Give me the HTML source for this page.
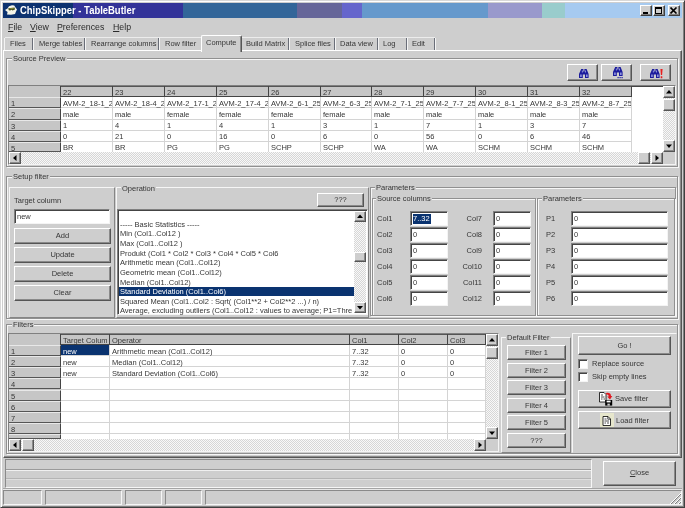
<!DOCTYPE html>
<html><head><meta charset="utf-8"><title>ChipSkipper - TableButler</title>
<style>
*{box-sizing:border-box;margin:0;padding:0}
html,body{width:685px;height:508px;overflow:hidden;background:#cecece}
body{position:relative;font-family:"Liberation Sans",sans-serif;font-size:7.5px;color:#363636;line-height:1}
#w{position:absolute;left:0;top:0;width:685px;height:508px;will-change:transform}
.a{position:absolute;white-space:nowrap}
.t{position:absolute;white-space:nowrap;line-height:10px;height:10px}
.btn{position:absolute;background:#cecece;border:1px solid;border-color:#fff #555 #555 #fff;box-shadow:inset -1px -1px 0 #8a8a8a;text-align:center;white-space:nowrap}
.sunk{position:absolute;background:#fff;border:1px solid;border-color:#808080 #f4f4f4 #f4f4f4 #808080;box-shadow:inset 1px 1px 0 #444}
.grp{position:absolute;border:1px solid #909090;box-shadow:1px 1px 0 #f6f6f6,inset 1px 1px 0 #f6f6f6}
.lbl{position:absolute;background:#cecece;white-space:nowrap;line-height:9px;height:9px;padding:0 1px}
.hl{position:absolute;height:1px}
.vl{position:absolute;width:1px}
.dither{position:absolute;background:#e6e6e6;background-image:repeating-conic-gradient(#f8f8f8 0 25%,#d6d6d6 0 50%);background-size:2px 2px}
.cell{position:absolute;white-space:nowrap;overflow:hidden;line-height:11px;height:11px}
u{text-decoration:underline}
</style></head>
<body>
<div id="w">
<div class="a" style="left:0px;top:0px;width:685px;height:508px;background:#cecece;border:1px solid;border-color:#d8d8d8 #404040 #404040 #d8d8d8;box-shadow:inset 1px 1px 0 #fff,inset -1px -1px 0 #808080"></div>
<div class="a" style="left:3px;top:3px;width:70px;height:15px;background:#0c3270"></div>
<div class="a" style="left:73px;top:3px;width:110px;height:15px;background:#333399"></div>
<div class="a" style="left:183px;top:3px;width:114px;height:15px;background:#336699"></div>
<div class="a" style="left:297px;top:3px;width:45px;height:15px;background:#666699"></div>
<div class="a" style="left:342px;top:3px;width:20px;height:15px;background:#6666cc"></div>
<div class="a" style="left:362px;top:3px;width:126px;height:15px;background:#6699cc"></div>
<div class="a" style="left:488px;top:3px;width:54px;height:15px;background:#9999cc"></div>
<div class="a" style="left:542px;top:3px;width:23px;height:15px;background:#99cccc"></div>
<div class="a" style="left:565px;top:3px;width:117px;height:15px;background:#a6caf0"></div>
<svg class="a" style="left:5px;top:5px" width="12" height="10" viewBox="0 0 12 10"><path d="M0 5 L2.5 3.5 L4 1.2 L7 0.2 L9.2 0.5 L10.5 2.5 L12 4.5 L11 6.5 L10 9 L6 9.8 L2 9.6 L2.6 7 Z" fill="#f6f6ea"/><path d="M3.2 3.2 L9.6 2.6 L10 4.6 L7.5 5.4 L6.5 4.8 L5.2 5.6 L3.8 5.2Z" fill="#4a5220"/><path d="M4.5 3.4 L8.5 3 L8.6 3.7 L4.6 4.1Z" fill="#98a040"/></svg>
<div class="t" style="left:20px;top:4px;color:#fff;font-weight:bold;font-size:10.5px;line-height:13px;height:13px;transform:scaleX(0.9);transform-origin:0 0">ChipSkipper - TableButler</div>
<div class="a" style="left:640px;top:5px;width:12px;height:11px;background:#cecece;border:1px solid;border-color:#fff #404040 #404040 #fff;box-shadow:inset -1px -1px 0 #808080"><div class="a" style="left:2px;top:6px;width:5px;height:2px;background:#000"></div></div>
<div class="a" style="left:653px;top:5px;width:12px;height:11px;background:#cecece;border:1px solid;border-color:#fff #404040 #404040 #fff;box-shadow:inset -1px -1px 0 #808080"><div class="a" style="left:1px;top:1px;width:7px;height:7px;border:1px solid #000;border-top-width:2px"></div></div>
<div class="a" style="left:668px;top:5px;width:12px;height:11px;background:#cecece;border:1px solid;border-color:#fff #404040 #404040 #fff;box-shadow:inset -1px -1px 0 #808080"><svg class="a" style="left:1px;top:1px" width="8" height="7" viewBox="0 0 8 7"><path d="M0.5 0.5 L6.5 6.5 M6.5 0.5 L0.5 6.5" stroke="#000" stroke-width="1.6"/></svg></div>
<div class="t" style="left:8px;top:21px;font-size:9.5px;line-height:12px;height:12px;color:#2a2a2a;transform:scaleX(0.925);transform-origin:0 0"><u>F</u>ile</div>
<div class="t" style="left:30px;top:21px;font-size:9.5px;line-height:12px;height:12px;color:#2a2a2a;transform:scaleX(0.925);transform-origin:0 0"><u>V</u>iew</div>
<div class="t" style="left:57px;top:21px;font-size:9.5px;line-height:12px;height:12px;color:#2a2a2a;transform:scaleX(0.925);transform-origin:0 0"><u>P</u>references</div>
<div class="t" style="left:113px;top:21px;font-size:9.5px;line-height:12px;height:12px;color:#2a2a2a;transform:scaleX(0.925);transform-origin:0 0"><u>H</u>elp</div>
<div class="a" style="left:3px;top:50px;width:679px;height:408px;border:1px solid;border-color:#fff #555 #555 #fff;box-shadow:inset -1px -1px 0 #8a8a8a"></div>
<div class="t" style="left:10px;top:39px;">Files</div>
<div class="a" style="left:32px;top:38px;width:1px;height:12px;background:#6a6e78"></div>
<div class="a" style="left:33px;top:38px;width:1px;height:12px;background:#f4f4f4"></div>
<div class="t" style="left:39px;top:39px;">Merge tables</div>
<div class="a" style="left:84px;top:38px;width:1px;height:12px;background:#6a6e78"></div>
<div class="a" style="left:85px;top:38px;width:1px;height:12px;background:#f4f4f4"></div>
<div class="t" style="left:91px;top:39px;">Rearrange columns</div>
<div class="a" style="left:158px;top:38px;width:1px;height:12px;background:#6a6e78"></div>
<div class="a" style="left:159px;top:38px;width:1px;height:12px;background:#f4f4f4"></div>
<div class="t" style="left:165px;top:39px;">Row filter</div>
<div class="a" style="left:201px;top:38px;width:1px;height:12px;background:#6a6e78"></div>
<div class="a" style="left:202px;top:38px;width:1px;height:12px;background:#f4f4f4"></div>
<div class="t" style="left:246px;top:39px;">Build Matrix</div>
<div class="a" style="left:288px;top:38px;width:1px;height:12px;background:#6a6e78"></div>
<div class="a" style="left:289px;top:38px;width:1px;height:12px;background:#f4f4f4"></div>
<div class="t" style="left:295px;top:39px;">Splice files</div>
<div class="a" style="left:334px;top:38px;width:1px;height:12px;background:#6a6e78"></div>
<div class="a" style="left:335px;top:38px;width:1px;height:12px;background:#f4f4f4"></div>
<div class="t" style="left:340px;top:39px;">Data view</div>
<div class="a" style="left:377px;top:38px;width:1px;height:12px;background:#6a6e78"></div>
<div class="a" style="left:378px;top:38px;width:1px;height:12px;background:#f4f4f4"></div>
<div class="t" style="left:383px;top:39px;">Log</div>
<div class="a" style="left:406px;top:38px;width:1px;height:12px;background:#6a6e78"></div>
<div class="a" style="left:407px;top:38px;width:1px;height:12px;background:#f4f4f4"></div>
<div class="t" style="left:412px;top:39px;">Edit</div>
<div class="a" style="left:434px;top:38px;width:1px;height:12px;background:#6a6e78"></div>
<div class="a" style="left:435px;top:38px;width:1px;height:12px;background:#f4f4f4"></div>
<div class="a" style="left:4px;top:38px;width:1px;height:12px;background:#f4f4f4"></div>
<div class="a" style="left:5px;top:37px;width:430px;height:1px;background:#ececec"></div>
<div class="a" style="left:201px;top:35px;width:41px;height:17px;background:#cecece;border:1px solid;border-color:#fff #555 #cecece #fff;border-bottom:none;box-shadow:inset -1px 0 0 #8a8a8a;border-radius:2px 2px 0 0"></div>
<div class="t" style="left:206px;top:38px;">Compute</div>
<div class="grp" style="left:6px;top:58px;width:672px;height:109px;"></div>
<div class="lbl" style="left:12px;top:54px">Source Preview</div>
<div class="btn" style="left:567px;top:64px;width:31px;height:17px;line-height:15px;"><svg class="a" style="left:10.5px;top:4px" width="14" height="12" viewBox="0 0 14 12"><path d="M2.2 0H4.4V2.6H5.4V0H7.6L9.6 5V9H6V5.6H3.8V9H0V5Z" fill="#1c1c9c"/><path d="M1.3 5.6h1.3v2.3h-1.3zM7.2 5.6h1.3v2.3h-1.3zM2.9 1.4h.8v2.2h-.8zM6.1 1.4h.8v2.2h-.8z" fill="#a8b0f0"/></svg></div>
<div class="btn" style="left:601px;top:64px;width:31px;height:17px;line-height:15px;"><svg class="a" style="left:10.5px;top:2px" width="14" height="12" viewBox="0 0 14 12"><path d="M2.2 0H4.4V2.6H5.4V0H7.6L9.6 5V9H6V5.6H3.8V9H0V5Z" fill="#1c1c9c"/><path d="M1.3 5.6h1.3v2.3h-1.3zM7.2 5.6h1.3v2.3h-1.3zM2.9 1.4h.8v2.2h-.8zM6.1 1.4h.8v2.2h-.8z" fill="#a8b0f0"/><path d="M4.5 10h1.2v1.3h-1.2zM6.5 10h1.2v1.3h-1.2zM8.5 10h1.2v1.3h-1.2z" fill="#1c1c9c"/></svg></div>
<div class="btn" style="left:640px;top:64px;width:31px;height:17px;line-height:15px;"><svg class="a" style="left:8.7px;top:3.5px" width="14" height="12" viewBox="0 0 14 12"><path d="M2.2 0H4.4V2.6H5.4V0H7.6L9.6 5V9H6V5.6H3.8V9H0V5Z" fill="#1c1c9c"/><path d="M1.3 5.6h1.3v2.3h-1.3zM7.2 5.6h1.3v2.3h-1.3zM2.9 1.4h.8v2.2h-.8zM6.1 1.4h.8v2.2h-.8z" fill="#a8b0f0"/><path d="M10.4 0h2.2l-.5 6h-1.2zM10.7 7.2h1.6v2h-1.6z" fill="#e82020"/></svg></div>
<div class="sunk" style="left:8px;top:85px;width:668px;height:80px;"></div>
<div class="a" style="left:9px;top:86px;width:623px;height:11.2px;background:#c6c6c6;border-bottom:1px solid #444;border-top:1px solid #555"></div>
<div class="a" style="left:9px;top:86px;width:52px;height:66px;background:#c6c6c6"></div>
<div class="a" style="left:60px;top:86px;width:1px;height:11.2px;background:#444"></div>
<div class="a" style="left:112px;top:86px;width:1px;height:11.2px;background:#444"></div>
<div class="a" style="left:164px;top:86px;width:1px;height:11.2px;background:#444"></div>
<div class="a" style="left:216px;top:86px;width:1px;height:11.2px;background:#444"></div>
<div class="a" style="left:268px;top:86px;width:1px;height:11.2px;background:#444"></div>
<div class="a" style="left:320px;top:86px;width:1px;height:11.2px;background:#444"></div>
<div class="a" style="left:371px;top:86px;width:1px;height:11.2px;background:#444"></div>
<div class="a" style="left:423px;top:86px;width:1px;height:11.2px;background:#444"></div>
<div class="a" style="left:475px;top:86px;width:1px;height:11.2px;background:#444"></div>
<div class="a" style="left:527px;top:86px;width:1px;height:11.2px;background:#444"></div>
<div class="a" style="left:579px;top:86px;width:1px;height:11.2px;background:#444"></div>
<div class="a" style="left:631px;top:86px;width:1px;height:11.2px;background:#444"></div>
<div class="cell" style="left:11px;top:87px;width:49px"></div>
<div class="cell" style="left:63px;top:87px;width:49px">22</div>
<div class="cell" style="left:115px;top:87px;width:49px">23</div>
<div class="cell" style="left:167px;top:87px;width:49px">24</div>
<div class="cell" style="left:219px;top:87px;width:49px">25</div>
<div class="cell" style="left:271px;top:87px;width:49px">26</div>
<div class="cell" style="left:323px;top:87px;width:48px">27</div>
<div class="cell" style="left:374px;top:87px;width:49px">28</div>
<div class="cell" style="left:426px;top:87px;width:49px">29</div>
<div class="cell" style="left:478px;top:87px;width:49px">30</div>
<div class="cell" style="left:530px;top:87px;width:49px">31</div>
<div class="cell" style="left:582px;top:87px;width:49px">32</div>
<div class="a" style="left:9px;top:97.2px;width:52px;height:11.2px;background:#c6c6c6;border-bottom:1px solid #555;border-right:1px solid #444;border-top:1px solid #e8e8e8"></div>
<div class="cell" style="left:11px;top:98.2px;height:10.2px">1</div>
<div class="a" style="left:61px;top:107.4px;width:571px;height:1px;background:#d4d4d4"></div>
<div class="cell" style="left:63px;top:97.80px;width:50px;">AVM-2_18-1_25</div>
<div class="cell" style="left:115px;top:97.80px;width:50px;">AVM-2_18-4_25</div>
<div class="cell" style="left:167px;top:97.80px;width:50px;">AVM-2_17-1_25</div>
<div class="cell" style="left:219px;top:97.80px;width:50px;">AVM-2_17-4_25</div>
<div class="cell" style="left:271px;top:97.80px;width:50px;">AVM-2_6-1_251</div>
<div class="cell" style="left:323px;top:97.80px;width:49px;">AVM-2_6-3_251</div>
<div class="cell" style="left:374px;top:97.80px;width:50px;">AVM-2_7-1_251</div>
<div class="cell" style="left:426px;top:97.80px;width:50px;">AVM-2_7-7_251</div>
<div class="cell" style="left:478px;top:97.80px;width:50px;">AVM-2_8-1_251</div>
<div class="cell" style="left:530px;top:97.80px;width:50px;">AVM-2_8-3_251</div>
<div class="cell" style="left:582px;top:97.80px;width:50px;">AVM-2_8-7_251</div>
<div class="a" style="left:9px;top:108.4px;width:52px;height:11.2px;background:#c6c6c6;border-bottom:1px solid #555;border-right:1px solid #444;border-top:1px solid #e8e8e8"></div>
<div class="cell" style="left:11px;top:109.4px;height:10.2px">2</div>
<div class="a" style="left:61px;top:118.60000000000001px;width:571px;height:1px;background:#d4d4d4"></div>
<div class="cell" style="left:63px;top:108.88px;width:50px;">male</div>
<div class="cell" style="left:115px;top:108.88px;width:50px;">male</div>
<div class="cell" style="left:167px;top:108.88px;width:50px;">female</div>
<div class="cell" style="left:219px;top:108.88px;width:50px;">female</div>
<div class="cell" style="left:271px;top:108.88px;width:50px;">female</div>
<div class="cell" style="left:323px;top:108.88px;width:49px;">female</div>
<div class="cell" style="left:374px;top:108.88px;width:50px;">male</div>
<div class="cell" style="left:426px;top:108.88px;width:50px;">male</div>
<div class="cell" style="left:478px;top:108.88px;width:50px;">male</div>
<div class="cell" style="left:530px;top:108.88px;width:50px;">male</div>
<div class="cell" style="left:582px;top:108.88px;width:50px;">male</div>
<div class="a" style="left:9px;top:119.6px;width:52px;height:11.2px;background:#c6c6c6;border-bottom:1px solid #555;border-right:1px solid #444;border-top:1px solid #e8e8e8"></div>
<div class="cell" style="left:11px;top:120.6px;height:10.2px">3</div>
<div class="a" style="left:61px;top:129.79999999999998px;width:571px;height:1px;background:#d4d4d4"></div>
<div class="cell" style="left:63px;top:119.96px;width:50px;">1</div>
<div class="cell" style="left:115px;top:119.96px;width:50px;">4</div>
<div class="cell" style="left:167px;top:119.96px;width:50px;">1</div>
<div class="cell" style="left:219px;top:119.96px;width:50px;">4</div>
<div class="cell" style="left:271px;top:119.96px;width:50px;">1</div>
<div class="cell" style="left:323px;top:119.96px;width:49px;">3</div>
<div class="cell" style="left:374px;top:119.96px;width:50px;">1</div>
<div class="cell" style="left:426px;top:119.96px;width:50px;">7</div>
<div class="cell" style="left:478px;top:119.96px;width:50px;">1</div>
<div class="cell" style="left:530px;top:119.96px;width:50px;">3</div>
<div class="cell" style="left:582px;top:119.96px;width:50px;">7</div>
<div class="a" style="left:9px;top:130.8px;width:52px;height:11.2px;background:#c6c6c6;border-bottom:1px solid #555;border-right:1px solid #444;border-top:1px solid #e8e8e8"></div>
<div class="cell" style="left:11px;top:131.8px;height:10.2px">4</div>
<div class="a" style="left:61px;top:141.0px;width:571px;height:1px;background:#d4d4d4"></div>
<div class="cell" style="left:63px;top:131.04px;width:50px;">0</div>
<div class="cell" style="left:115px;top:131.04px;width:50px;">21</div>
<div class="cell" style="left:167px;top:131.04px;width:50px;">0</div>
<div class="cell" style="left:219px;top:131.04px;width:50px;">16</div>
<div class="cell" style="left:271px;top:131.04px;width:50px;">0</div>
<div class="cell" style="left:323px;top:131.04px;width:49px;">6</div>
<div class="cell" style="left:374px;top:131.04px;width:50px;">0</div>
<div class="cell" style="left:426px;top:131.04px;width:50px;">56</div>
<div class="cell" style="left:478px;top:131.04px;width:50px;">0</div>
<div class="cell" style="left:530px;top:131.04px;width:50px;">6</div>
<div class="cell" style="left:582px;top:131.04px;width:50px;">46</div>
<div class="a" style="left:9px;top:142.0px;width:52px;height:10.0px;background:#c6c6c6;border-bottom:1px solid #555;border-right:1px solid #444;border-top:1px solid #e8e8e8"></div>
<div class="cell" style="left:11px;top:143.0px;height:9.0px">5</div>
<div class="cell" style="left:63px;top:142.12px;width:50px;">BR</div>
<div class="cell" style="left:115px;top:142.12px;width:50px;">BR</div>
<div class="cell" style="left:167px;top:142.12px;width:50px;">PG</div>
<div class="cell" style="left:219px;top:142.12px;width:50px;">PG</div>
<div class="cell" style="left:271px;top:142.12px;width:50px;">SCHP</div>
<div class="cell" style="left:323px;top:142.12px;width:49px;">SCHP</div>
<div class="cell" style="left:374px;top:142.12px;width:50px;">WA</div>
<div class="cell" style="left:426px;top:142.12px;width:50px;">WA</div>
<div class="cell" style="left:478px;top:142.12px;width:50px;">SCHM</div>
<div class="cell" style="left:530px;top:142.12px;width:50px;">SCHM</div>
<div class="cell" style="left:582px;top:142.12px;width:50px;">SCHM</div>
<div class="a" style="left:112px;top:97.2px;width:1px;height:54.8px;background:#d4d4d4"></div>
<div class="a" style="left:164px;top:97.2px;width:1px;height:54.8px;background:#d4d4d4"></div>
<div class="a" style="left:216px;top:97.2px;width:1px;height:54.8px;background:#d4d4d4"></div>
<div class="a" style="left:268px;top:97.2px;width:1px;height:54.8px;background:#d4d4d4"></div>
<div class="a" style="left:320px;top:97.2px;width:1px;height:54.8px;background:#d4d4d4"></div>
<div class="a" style="left:371px;top:97.2px;width:1px;height:54.8px;background:#d4d4d4"></div>
<div class="a" style="left:423px;top:97.2px;width:1px;height:54.8px;background:#d4d4d4"></div>
<div class="a" style="left:475px;top:97.2px;width:1px;height:54.8px;background:#d4d4d4"></div>
<div class="a" style="left:527px;top:97.2px;width:1px;height:54.8px;background:#d4d4d4"></div>
<div class="a" style="left:579px;top:97.2px;width:1px;height:54.8px;background:#d4d4d4"></div>
<div class="a" style="left:631px;top:97.2px;width:1px;height:54.8px;background:#d4d4d4"></div>
<div class="dither" style="left:663px;top:86px;width:12px;height:66px;"></div>
<div class="btn" style="left:663px;top:86px;width:12px;height:12px"><svg class="a" style="left:-1px;top:-1px" width="12" height="12"><polygon points="3.0,7.5 9.0,7.5 6.0,4.0" fill="#000"/></svg></div>
<div class="btn" style="left:663px;top:140px;width:12px;height:12px"><svg class="a" style="left:-1px;top:-1px" width="12" height="12"><polygon points="3.0,4.5 9.0,4.5 6.0,8.0" fill="#000"/></svg></div>
<div class="btn" style="left:663px;top:99px;width:12px;height:12px"></div>
<div class="dither" style="left:9px;top:152px;width:654px;height:12px;"></div>
<div class="a" style="left:663px;top:152px;width:12px;height:12px;background:#cecece"></div>
<div class="btn" style="left:9px;top:152px;width:12px;height:12px"><svg class="a" style="left:-1px;top:-1px" width="12" height="12"><polygon points="7.5,3.0 7.5,9.0 4.0,6.0" fill="#000"/></svg></div>
<div class="btn" style="left:651px;top:152px;width:12px;height:12px"><svg class="a" style="left:-1px;top:-1px" width="12" height="12"><polygon points="4.5,3.0 4.5,9.0 8.0,6.0" fill="#000"/></svg></div>
<div class="btn" style="left:638px;top:152px;width:12px;height:12px"></div>
<div class="grp" style="left:6px;top:176px;width:672px;height:143px;"></div>
<div class="lbl" style="left:12px;top:172px">Setup filter</div>
<div class="a" style="left:9px;top:187px;width:106px;height:131px;border:1px solid;border-color:#f6f6f6 #858585 #858585 #f6f6f6"></div>
<div class="t" style="left:14px;top:196px;">Target column</div>
<div class="sunk" style="left:14px;top:209px;width:96px;height:15px;"><div class="t" style="left:2px;top:2px">new</div></div>
<div class="btn" style="left:14px;top:228px;width:97px;height:16px;line-height:14px;line-height:13px">Add</div>
<div class="btn" style="left:14px;top:247px;width:97px;height:16px;line-height:14px;line-height:13px">Update</div>
<div class="btn" style="left:14px;top:266px;width:97px;height:16px;line-height:14px;line-height:13px">Delete</div>
<div class="btn" style="left:14px;top:285px;width:97px;height:16px;line-height:14px;line-height:13px">Clear</div>
<div class="a" style="left:116px;top:187px;width:253px;height:131px;border:1px solid;border-color:#f6f6f6 #858585 #858585 #f6f6f6"></div>
<div class="lbl" style="left:121px;top:184px">Operation</div>
<div class="btn" style="left:317px;top:193px;width:47px;height:14px;line-height:12px;">???</div>
<div class="sunk" style="left:117px;top:209px;width:251px;height:106px;"></div>
<div class="cell" style="left:120px;top:210.0px;width:233px;line-height:10px;height:10px;"></div>
<div class="cell" style="left:120px;top:220.0px;width:233px;line-height:10px;height:10px;">----- Basic Statistics -----</div>
<div class="cell" style="left:120px;top:229.0px;width:233px;line-height:10px;height:10px;">Min (Col1..Col12 )</div>
<div class="cell" style="left:120px;top:239.0px;width:233px;line-height:10px;height:10px;">Max (Col1..Col12 )</div>
<div class="cell" style="left:120px;top:249.0px;width:233px;line-height:10px;height:10px;">Produkt (Col1 * Col2 * Col3 * Col4 * Col5 * Col6</div>
<div class="cell" style="left:120px;top:258.0px;width:233px;line-height:10px;height:10px;">Arithmetic mean (Col1..Col12)</div>
<div class="cell" style="left:120px;top:268.0px;width:233px;line-height:10px;height:10px;">Geometric mean (Col1..Col12)</div>
<div class="cell" style="left:120px;top:278.0px;width:233px;line-height:10px;height:10px;">Median (Col1..Col12)</div>
<div class="a" style="left:119px;top:287px;width:235px;height:9.3px;background:#0a3370"></div>
<div class="cell" style="left:120px;top:287.0px;width:233px;line-height:10px;height:10px;color:#fff;">Standard Deviation (Col1..Col6)</div>
<div class="cell" style="left:120px;top:297.0px;width:233px;line-height:10px;height:10px;">Squared Mean (Col1..Col2 : Sqrt( (Col1**2 + Col2**2 ...) / n)</div>
<div class="cell" style="left:120px;top:306.0px;width:233px;line-height:10px;height:10px;">Average, excluding outliers (Col1..Col12 : values to average; P1=Thre</div>
<div class="dither" style="left:354px;top:211px;width:12px;height:102px;"></div>
<div class="btn" style="left:354px;top:211px;width:12px;height:11px"><svg class="a" style="left:-1px;top:-1px" width="12" height="11"><polygon points="3.0,7.0 9.0,7.0 6.0,3.5" fill="#000"/></svg></div>
<div class="btn" style="left:354px;top:302px;width:12px;height:11px"><svg class="a" style="left:-1px;top:-1px" width="12" height="11"><polygon points="3.0,4.0 9.0,4.0 6.0,7.5" fill="#000"/></svg></div>
<div class="btn" style="left:354px;top:252px;width:12px;height:10px"></div>
<div class="grp" style="left:370px;top:187px;width:306px;height:129px;"></div>
<div class="lbl" style="left:375px;top:183px">Parameters</div>
<div class="grp" style="left:372px;top:198px;width:164px;height:118px;"></div>
<div class="lbl" style="left:376px;top:194px">Source columns</div>
<div class="grp" style="left:537px;top:198px;width:138px;height:118px;"></div>
<div class="lbl" style="left:542px;top:194px">Parameters</div>
<div class="t" style="left:377px;top:214px;">Col1</div>
<div class="t" style="left:439px;width:43px;text-align:right;top:214px">Col7</div>
<div class="t" style="left:546px;top:214px;">P1</div>
<div class="sunk" style="left:410px;top:211px;width:38px;height:15px;"><div class="t" style="left:2px;top:2px;background:#0a3370;color:#fff;padding:0 1px 0 0">7..32</div></div>
<div class="sunk" style="left:493px;top:211px;width:38px;height:15px;"><div class="t" style="left:2px;top:2px">0</div></div>
<div class="sunk" style="left:571px;top:211px;width:97px;height:15px;"><div class="t" style="left:2px;top:2px">0</div></div>
<div class="t" style="left:377px;top:230px;">Col2</div>
<div class="t" style="left:439px;width:43px;text-align:right;top:230px">Col8</div>
<div class="t" style="left:546px;top:230px;">P2</div>
<div class="sunk" style="left:410px;top:227px;width:38px;height:15px;"><div class="t" style="left:2px;top:2px">0</div></div>
<div class="sunk" style="left:493px;top:227px;width:38px;height:15px;"><div class="t" style="left:2px;top:2px">0</div></div>
<div class="sunk" style="left:571px;top:227px;width:97px;height:15px;"><div class="t" style="left:2px;top:2px">0</div></div>
<div class="t" style="left:377px;top:246px;">Col3</div>
<div class="t" style="left:439px;width:43px;text-align:right;top:246px">Col9</div>
<div class="t" style="left:546px;top:246px;">P3</div>
<div class="sunk" style="left:410px;top:243px;width:38px;height:15px;"><div class="t" style="left:2px;top:2px">0</div></div>
<div class="sunk" style="left:493px;top:243px;width:38px;height:15px;"><div class="t" style="left:2px;top:2px">0</div></div>
<div class="sunk" style="left:571px;top:243px;width:97px;height:15px;"><div class="t" style="left:2px;top:2px">0</div></div>
<div class="t" style="left:377px;top:262px;">Col4</div>
<div class="t" style="left:439px;width:43px;text-align:right;top:262px">Col10</div>
<div class="t" style="left:546px;top:262px;">P4</div>
<div class="sunk" style="left:410px;top:259px;width:38px;height:15px;"><div class="t" style="left:2px;top:2px">0</div></div>
<div class="sunk" style="left:493px;top:259px;width:38px;height:15px;"><div class="t" style="left:2px;top:2px">0</div></div>
<div class="sunk" style="left:571px;top:259px;width:97px;height:15px;"><div class="t" style="left:2px;top:2px">0</div></div>
<div class="t" style="left:377px;top:278px;">Col5</div>
<div class="t" style="left:439px;width:43px;text-align:right;top:278px">Col11</div>
<div class="t" style="left:546px;top:278px;">P5</div>
<div class="sunk" style="left:410px;top:275px;width:38px;height:15px;"><div class="t" style="left:2px;top:2px">0</div></div>
<div class="sunk" style="left:493px;top:275px;width:38px;height:15px;"><div class="t" style="left:2px;top:2px">0</div></div>
<div class="sunk" style="left:571px;top:275px;width:97px;height:15px;"><div class="t" style="left:2px;top:2px">0</div></div>
<div class="t" style="left:377px;top:294px;">Col6</div>
<div class="t" style="left:439px;width:43px;text-align:right;top:294px">Col12</div>
<div class="t" style="left:546px;top:294px;">P6</div>
<div class="sunk" style="left:410px;top:291px;width:38px;height:15px;"><div class="t" style="left:2px;top:2px">0</div></div>
<div class="sunk" style="left:493px;top:291px;width:38px;height:15px;"><div class="t" style="left:2px;top:2px">0</div></div>
<div class="sunk" style="left:571px;top:291px;width:97px;height:15px;"><div class="t" style="left:2px;top:2px">0</div></div>
<div class="grp" style="left:6px;top:324px;width:672px;height:130px;"></div>
<div class="lbl" style="left:12px;top:320px">Filters</div>
<div class="sunk" style="left:8px;top:333px;width:491px;height:119px;"></div>
<div class="a" style="left:9px;top:334px;width:477px;height:11.1px;background:#c6c6c6;border-bottom:1px solid #444;border-top:1px solid #555"></div>
<div class="a" style="left:9px;top:334px;width:52px;height:105px;background:#c6c6c6"></div>
<div class="a" style="left:60px;top:334px;width:1px;height:11.1px;background:#444"></div>
<div class="a" style="left:109px;top:334px;width:1px;height:11.1px;background:#444"></div>
<div class="a" style="left:349px;top:334px;width:1px;height:11.1px;background:#444"></div>
<div class="a" style="left:398px;top:334px;width:1px;height:11.1px;background:#444"></div>
<div class="a" style="left:447px;top:334px;width:1px;height:11.1px;background:#444"></div>
<div class="a" style="left:485px;top:334px;width:1px;height:11.1px;background:#444"></div>
<div class="cell" style="left:11px;top:335px;width:49px"></div>
<div class="cell" style="left:63px;top:335px;width:46px">Target Colum</div>
<div class="cell" style="left:112px;top:335px;width:237px">Operator</div>
<div class="cell" style="left:352px;top:335px;width:46px">Col1</div>
<div class="cell" style="left:401px;top:335px;width:46px">Col2</div>
<div class="cell" style="left:450px;top:335px;width:35px">Col3</div>
<div class="a" style="left:9px;top:345.1px;width:52px;height:11.1px;background:#c6c6c6;border-bottom:1px solid #555;border-right:1px solid #444;border-top:1px solid #e8e8e8"></div>
<div class="cell" style="left:11px;top:346.1px;height:10.1px">1</div>
<div class="a" style="left:61px;top:355.20000000000005px;width:425px;height:1px;background:#d4d4d4"></div>
<div class="a" style="left:61px;top:345.1px;width:48px;height:10.1px;background:#0a3370"></div>
<div class="cell" style="left:63px;top:345.70px;width:47px;color:#fff;">new</div>
<div class="cell" style="left:112px;top:345.70px;width:238px;">Arithmetic mean (Col1..Col12)</div>
<div class="cell" style="left:352px;top:345.70px;width:47px;">7..32</div>
<div class="cell" style="left:401px;top:345.70px;width:47px;">0</div>
<div class="cell" style="left:450px;top:345.70px;width:36px;">0</div>
<div class="a" style="left:9px;top:356.20000000000005px;width:52px;height:11.1px;background:#c6c6c6;border-bottom:1px solid #555;border-right:1px solid #444;border-top:1px solid #e8e8e8"></div>
<div class="cell" style="left:11px;top:357.20000000000005px;height:10.1px">2</div>
<div class="a" style="left:61px;top:366.30000000000007px;width:425px;height:1px;background:#d4d4d4"></div>
<div class="cell" style="left:63px;top:356.68px;width:47px;">new</div>
<div class="cell" style="left:112px;top:356.68px;width:238px;">Median (Col1..Col12)</div>
<div class="cell" style="left:352px;top:356.68px;width:47px;">7..32</div>
<div class="cell" style="left:401px;top:356.68px;width:47px;">0</div>
<div class="cell" style="left:450px;top:356.68px;width:36px;">0</div>
<div class="a" style="left:9px;top:367.3px;width:52px;height:11.1px;background:#c6c6c6;border-bottom:1px solid #555;border-right:1px solid #444;border-top:1px solid #e8e8e8"></div>
<div class="cell" style="left:11px;top:368.3px;height:10.1px">3</div>
<div class="a" style="left:61px;top:377.40000000000003px;width:425px;height:1px;background:#d4d4d4"></div>
<div class="cell" style="left:63px;top:367.66px;width:47px;">new</div>
<div class="cell" style="left:112px;top:367.66px;width:238px;">Standard Deviation (Col1..Col6)</div>
<div class="cell" style="left:352px;top:367.66px;width:47px;">7..32</div>
<div class="cell" style="left:401px;top:367.66px;width:47px;">0</div>
<div class="cell" style="left:450px;top:367.66px;width:36px;">0</div>
<div class="a" style="left:9px;top:378.40000000000003px;width:52px;height:11.1px;background:#c6c6c6;border-bottom:1px solid #555;border-right:1px solid #444;border-top:1px solid #e8e8e8"></div>
<div class="cell" style="left:11px;top:379.40000000000003px;height:10.1px">4</div>
<div class="a" style="left:61px;top:388.50000000000006px;width:425px;height:1px;background:#d4d4d4"></div>
<div class="a" style="left:9px;top:389.5px;width:52px;height:11.1px;background:#c6c6c6;border-bottom:1px solid #555;border-right:1px solid #444;border-top:1px solid #e8e8e8"></div>
<div class="cell" style="left:11px;top:390.5px;height:10.1px">5</div>
<div class="a" style="left:61px;top:399.6px;width:425px;height:1px;background:#d4d4d4"></div>
<div class="a" style="left:9px;top:400.6px;width:52px;height:11.1px;background:#c6c6c6;border-bottom:1px solid #555;border-right:1px solid #444;border-top:1px solid #e8e8e8"></div>
<div class="cell" style="left:11px;top:401.6px;height:10.1px">6</div>
<div class="a" style="left:61px;top:410.70000000000005px;width:425px;height:1px;background:#d4d4d4"></div>
<div class="a" style="left:9px;top:411.70000000000005px;width:52px;height:11.1px;background:#c6c6c6;border-bottom:1px solid #555;border-right:1px solid #444;border-top:1px solid #e8e8e8"></div>
<div class="cell" style="left:11px;top:412.70000000000005px;height:10.1px">7</div>
<div class="a" style="left:61px;top:421.80000000000007px;width:425px;height:1px;background:#d4d4d4"></div>
<div class="a" style="left:9px;top:422.8px;width:52px;height:11.1px;background:#c6c6c6;border-bottom:1px solid #555;border-right:1px solid #444;border-top:1px solid #e8e8e8"></div>
<div class="cell" style="left:11px;top:423.8px;height:10.1px">8</div>
<div class="a" style="left:61px;top:432.90000000000003px;width:425px;height:1px;background:#d4d4d4"></div>
<div class="a" style="left:9px;top:433.90000000000003px;width:52px;height:5.099999999999966px;background:#c6c6c6;border-bottom:1px solid #555;border-right:1px solid #444;border-top:1px solid #e8e8e8"></div>
<div class="a" style="left:109px;top:345.1px;width:1px;height:93.9px;background:#d4d4d4"></div>
<div class="a" style="left:349px;top:345.1px;width:1px;height:93.9px;background:#d4d4d4"></div>
<div class="a" style="left:398px;top:345.1px;width:1px;height:93.9px;background:#d4d4d4"></div>
<div class="a" style="left:447px;top:345.1px;width:1px;height:93.9px;background:#d4d4d4"></div>
<div class="a" style="left:485px;top:345.1px;width:1px;height:93.9px;background:#d4d4d4"></div>
<div class="dither" style="left:486px;top:334px;width:12px;height:105px;"></div>
<div class="btn" style="left:486px;top:334px;width:12px;height:12px"><svg class="a" style="left:-1px;top:-1px" width="12" height="12"><polygon points="3.0,7.5 9.0,7.5 6.0,4.0" fill="#000"/></svg></div>
<div class="btn" style="left:486px;top:427px;width:12px;height:12px"><svg class="a" style="left:-1px;top:-1px" width="12" height="12"><polygon points="3.0,4.5 9.0,4.5 6.0,8.0" fill="#000"/></svg></div>
<div class="btn" style="left:486px;top:347px;width:12px;height:12px"></div>
<div class="dither" style="left:9px;top:439px;width:477px;height:12px;"></div>
<div class="a" style="left:486px;top:439px;width:12px;height:12px;background:#cecece"></div>
<div class="btn" style="left:9px;top:439px;width:12px;height:12px"><svg class="a" style="left:-1px;top:-1px" width="12" height="12"><polygon points="7.5,3.0 7.5,9.0 4.0,6.0" fill="#000"/></svg></div>
<div class="btn" style="left:474px;top:439px;width:12px;height:12px"><svg class="a" style="left:-1px;top:-1px" width="12" height="12"><polygon points="4.5,3.0 4.5,9.0 8.0,6.0" fill="#000"/></svg></div>
<div class="btn" style="left:22px;top:439px;width:12px;height:12px"></div>
<div class="a" style="left:501px;top:337px;width:70px;height:116px;border:1px solid;border-color:#f6f6f6 #858585 #858585 #f6f6f6"></div>
<div class="lbl" style="left:506px;top:333px">Default Filter</div>
<div class="btn" style="left:507px;top:345.0px;width:59px;height:15px;line-height:13px;">Filter 1</div>
<div class="btn" style="left:507px;top:362.5px;width:59px;height:15px;line-height:13px;">Filter 2</div>
<div class="btn" style="left:507px;top:380.0px;width:59px;height:15px;line-height:13px;">Filter 3</div>
<div class="btn" style="left:507px;top:397.5px;width:59px;height:15px;line-height:13px;">Filter 4</div>
<div class="btn" style="left:507px;top:415.0px;width:59px;height:15px;line-height:13px;">Filter 5</div>
<div class="btn" style="left:507px;top:432.5px;width:59px;height:15px;line-height:13px;">???</div>
<div class="a" style="left:572px;top:333px;width:105px;height:120px;border:1px solid;border-color:#f6f6f6 transparent transparent #f6f6f6"></div>
<div class="btn" style="left:578px;top:336px;width:93px;height:19px;line-height:17px;">Go !</div>
<div class="sunk" style="left:578px;top:359px;width:10px;height:10px;"></div>
<div class="sunk" style="left:578px;top:372px;width:10px;height:10px;"></div>
<div class="t" style="left:592px;top:359px;">Replace source</div>
<div class="t" style="left:592px;top:372px;">Skip empty lines</div>
<div class="btn" style="left:578px;top:390px;width:93px;height:18px"><svg class="a" style="left:20px;top:1px" width="14" height="14" viewBox="0 0 14 14"><path d="M0.5 0.5h4.5l2 2v7.5h-6.5z" fill="#fff" stroke="#000" stroke-width=".8"/><path d="M2 3h2M2 5h3.5M2 7h1.5M4.5 7h1.5" stroke="#222" stroke-width=".8"/><path d="M7 1.2 C9.5 0.2 12 1.5 12 4 L13.3 4 L11 7.4 L8.2 4.6 L9.8 4.4 C9.6 3 8.6 2.4 7 2.6Z" fill="#e01820"/><rect x="6.2" y="8" width="7" height="5.6" fill="#000"/><rect x="7.6" y="8.6" width="4" height="1.8" fill="#fff"/><rect x="8.4" y="11.6" width="2.4" height="2" fill="#ccc"/></svg><div class="t" style="left:36px;top:3px">Save filter</div></div>
<div class="btn" style="left:578px;top:411px;width:93px;height:18px"><svg class="a" style="left:21px;top:1px" width="14" height="14" viewBox="0 0 14 14"><rect x="0" y="0" width="14" height="14" fill="#e6e6cc"/><path d="M3 3.5h5l2.5 2.5v6.5h-7.5z" fill="#fff" stroke="#000" stroke-width=".8"/><path d="M7.8 3.5v2.7h2.7" fill="none" stroke="#000" stroke-width=".7"/><path d="M4.5 6h2M4.5 8h4.5M4.5 10h1.5M7 10h2" stroke="#222" stroke-width=".8"/></svg><div class="t" style="left:37px;top:4px">Load filter</div></div>
<div class="a" style="left:5px;top:459px;width:587px;height:29px;border:1px solid;border-color:#8a8a8a #f6f6f6 #f6f6f6 #8a8a8a"></div>
<div class="a" style="left:6px;top:469px;width:585px;height:1px;background:#9a9a9a"></div>
<div class="a" style="left:6px;top:470px;width:585px;height:1px;background:#f0f0f0"></div>
<div class="a" style="left:6px;top:478px;width:585px;height:1px;background:#b4b4b4"></div>
<div class="a" style="left:6px;top:479px;width:585px;height:1px;background:#dedede"></div>
<div class="a" style="left:3px;top:488px;width:679px;height:1px;background:#a4a4a4"></div>
<div class="a" style="left:3px;top:489px;width:679px;height:1px;background:#e8e8e8"></div>
<div class="btn" style="left:603px;top:461px;width:73px;height:25px;line-height:23px;line-height:21px"><u>C</u>lose</div>
<div class="a" style="left:3px;top:490px;width:39px;height:15px;border:1px solid;border-color:#8a8a8a #f6f6f6 #f6f6f6 #8a8a8a"></div>
<div class="a" style="left:45px;top:490px;width:77px;height:15px;border:1px solid;border-color:#8a8a8a #f6f6f6 #f6f6f6 #8a8a8a"></div>
<div class="a" style="left:125px;top:490px;width:37px;height:15px;border:1px solid;border-color:#8a8a8a #f6f6f6 #f6f6f6 #8a8a8a"></div>
<div class="a" style="left:165px;top:490px;width:37px;height:15px;border:1px solid;border-color:#8a8a8a #f6f6f6 #f6f6f6 #8a8a8a"></div>
<div class="a" style="left:205px;top:490px;width:477px;height:15px;border:1px solid;border-color:#8a8a8a #f6f6f6 #f6f6f6 #8a8a8a"></div>
<svg class="a" style="left:670px;top:493px" width="12" height="12" viewBox="0 0 12 12"><path d="M11 1L1 11M11 5L5 11M11 9L9 11" stroke="#808080"/><path d="M11 0L0 11M11 4L4 11M11 8L8 11" stroke="#fff"/></svg>
</div>
</body></html>
